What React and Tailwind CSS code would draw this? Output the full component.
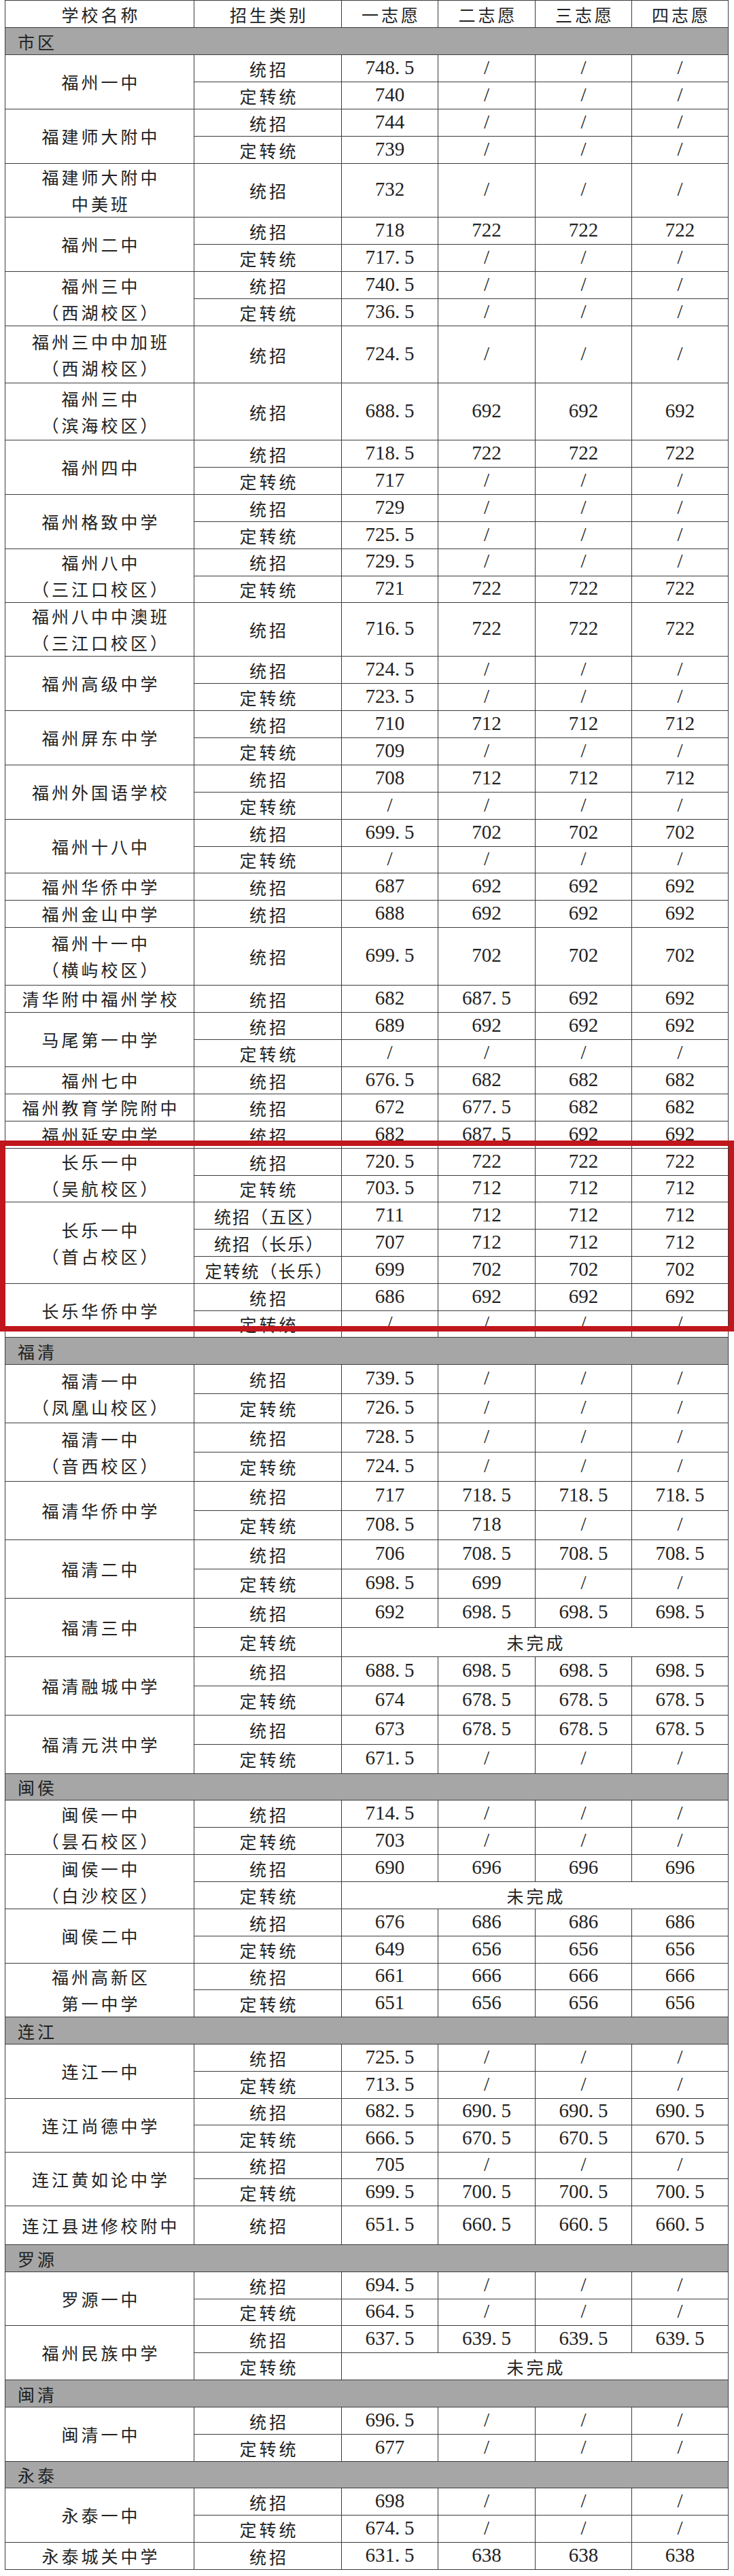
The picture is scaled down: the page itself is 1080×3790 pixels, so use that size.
import React from "react";

const CJK = "font-['Noto_Sans_CJK_SC',sans-serif]";
const SERIF = "font-['Liberation_Serif',serif]";

const H = {
  39: "h-[39px]",
  40: "h-[40px]",
  43: "h-[43px]",
  57: "h-[57px]",
  78: "h-[78px]",
  84: "h-[84px]",
  85: "h-[85px]",
};

const sections = [
  {
    name: "市区",
    h: 40,
    schools: [
      ["福州一中", [["统招", 40, "748.5", "/", "/", "/"], ["定转统", 40, "740", "/", "/", "/"]]],
      ["福建师大附中", [["统招", 40, "744", "/", "/", "/"], ["定转统", 40, "739", "/", "/", "/"]]],
      ["福建师大附中|中美班", [["统招", 78, "732", "/", "/", "/"]]],
      ["福州二中", [["统招", 40, "718", "722", "722", "722"], ["定转统", 40, "717.5", "/", "/", "/"]]],
      ["福州三中|（西湖校区）", [["统招", 40, "740.5", "/", "/", "/"], ["定转统", 40, "736.5", "/", "/", "/"]]],
      ["福州三中中加班|（西湖校区）", [["统招", 84, "724.5", "/", "/", "/"]]],
      ["福州三中|（滨海校区）", [["统招", 84, "688.5", "692", "692", "692"]]],
      ["福州四中", [["统招", 40, "718.5", "722", "722", "722"], ["定转统", 40, "717", "/", "/", "/"]]],
      ["福州格致中学", [["统招", 40, "729", "/", "/", "/"], ["定转统", 40, "725.5", "/", "/", "/"]]],
      ["福州八中|（三江口校区）", [["统招", 39, "729.5", "/", "/", "/"], ["定转统", 39, "721", "722", "722", "722"]]],
      ["福州八中中澳班|（三江口校区）", [["统招", 78, "716.5", "722", "722", "722"]]],
      ["福州高级中学", [["统招", 40, "724.5", "/", "/", "/"], ["定转统", 40, "723.5", "/", "/", "/"]]],
      ["福州屏东中学", [["统招", 40, "710", "712", "712", "712"], ["定转统", 40, "709", "/", "/", "/"]]],
      ["福州外国语学校", [["统招", 40, "708", "712", "712", "712"], ["定转统", 40, "/", "/", "/", "/"]]],
      ["福州十八中", [["统招", 40, "699.5", "702", "702", "702"], ["定转统", 39, "/", "/", "/", "/"]]],
      ["福州华侨中学", [["统招", 40, "687", "692", "692", "692"]]],
      ["福州金山中学", [["统招", 40, "688", "692", "692", "692"]]],
      ["福州十一中|（横屿校区）", [["统招", 85, "699.5", "702", "702", "702"]]],
      ["清华附中福州学校", [["统招", 39, "682", "687.5", "692", "692"]]],
      ["马尾第一中学", [["统招", 40, "689", "692", "692", "692"], ["定转统", 40, "/", "/", "/", "/"]]],
      ["福州七中", [["统招", 39, "676.5", "682", "682", "682"]]],
      ["福州教育学院附中", [["统招", 40, "672", "677.5", "682", "682"]]],
      ["福州延安中学", [["统招", 40, "682", "687.5", "692", "692"]]],
      ["长乐一中|（吴航校区）", [["统招", 40, "720.5", "722", "722", "722"], ["定转统", 39, "703.5", "712", "712", "712"]]],
      [
        "长乐一中|（首占校区）",
        [
          ["统招（五区）", 40, "711", "712", "712", "712"],
          ["统招（长乐）", 40, "707", "712", "712", "712"],
          ["定转统（长乐）", 40, "699", "702", "702", "702"],
        ],
      ],
      ["长乐华侨中学", [["统招", 40, "686", "692", "692", "692"], ["定转统", 39, "/", "/", "/", "/"]]],
    ],
  },
  {
    name: "福清",
    h: 40,
    schools: [
      ["福清一中|（凤凰山校区）", [["统招", 43, "739.5", "/", "/", "/"], ["定转统", 43, "726.5", "/", "/", "/"]]],
      ["福清一中|（音西校区）", [["统招", 43, "728.5", "/", "/", "/"], ["定转统", 43, "724.5", "/", "/", "/"]]],
      ["福清华侨中学", [["统招", 43, "717", "718.5", "718.5", "718.5"], ["定转统", 43, "708.5", "718", "/", "/"]]],
      ["福清二中", [["统招", 43, "706", "708.5", "708.5", "708.5"], ["定转统", 43, "698.5", "699", "/", "/"]]],
      ["福清三中", [["统招", 43, "692", "698.5", "698.5", "698.5"], ["定转统", 43, "未完成"]]],
      ["福清融城中学", [["统招", 43, "688.5", "698.5", "698.5", "698.5"], ["定转统", 43, "674", "678.5", "678.5", "678.5"]]],
      ["福清元洪中学", [["统招", 43, "673", "678.5", "678.5", "678.5"], ["定转统", 43, "671.5", "/", "/", "/"]]],
    ],
  },
  {
    name: "闽侯",
    h: 39,
    schools: [
      ["闽侯一中|（昙石校区）", [["统招", 40, "714.5", "/", "/", "/"], ["定转统", 40, "703", "/", "/", "/"]]],
      ["闽侯一中|（白沙校区）", [["统招", 40, "690", "696", "696", "696"], ["定转统", 40, "未完成"]]],
      ["闽侯二中", [["统招", 40, "676", "686", "686", "686"], ["定转统", 40, "649", "656", "656", "656"]]],
      ["福州高新区|第一中学", [["统招", 39, "661", "666", "666", "666"], ["定转统", 40, "651", "656", "656", "656"]]],
    ],
  },
  {
    name: "连江",
    h: 40,
    schools: [
      ["连江一中", [["统招", 40, "725.5", "/", "/", "/"], ["定转统", 40, "713.5", "/", "/", "/"]]],
      ["连江尚德中学", [["统招", 39, "682.5", "690.5", "690.5", "690.5"], ["定转统", 40, "666.5", "670.5", "670.5", "670.5"]]],
      ["连江黄如论中学", [["统招", 39, "705", "/", "/", "/"], ["定转统", 40, "699.5", "700.5", "700.5", "700.5"]]],
      ["连江县进修校附中", [["统招", 57, "651.5", "660.5", "660.5", "660.5"]]],
    ],
  },
  {
    name: "罗源",
    h: 40,
    schools: [
      ["罗源一中", [["统招", 40, "694.5", "/", "/", "/"], ["定转统", 39, "664.5", "/", "/", "/"]]],
      ["福州民族中学", [["统招", 40, "637.5", "639.5", "639.5", "639.5"], ["定转统", 40, "未完成"]]],
    ],
  },
  {
    name: "闽清",
    h: 40,
    schools: [["闽清一中", [["统招", 40, "696.5", "/", "/", "/"], ["定转统", 40, "677", "/", "/", "/"]]]],
  },
  {
    name: "永泰",
    h: 39,
    schools: [
      ["永泰一中", [["统招", 40, "698", "/", "/", "/"], ["定转统", 40, "674.5", "/", "/", "/"]]],
      ["永泰城关中学", [["统招", 40, "631.5", "638", "638", "638"]]],
    ],
  },
];

const cell = "border border-[#3c3c3c] p-0 text-center align-middle";
const cjkText = `${CJK} text-[25px] pl-[4px] leading-[32px] text-[#222]`;

function Num({ v }) {
  if (v === "/") return <span className={`${SERIF} text-[29px] text-[#222]`}>/</span>;
  const [a, b] = v.split(".");
  return (
    <span className={`${SERIF} text-[29px] text-[#222]`}>
      {a}
      {b !== undefined && (
        <>
          <span className="inline-block w-[14px] text-left">.</span>
          {b}
        </>
      )}
    </span>
  );
}

function School({ name, rows }) {
  const lines = name.split("|");
  return rows.map((r, i) => {
    const [type, h, ...vals] = r;
    const typeTrack = type.length > 3 ? "tracking-[2px]" : "tracking-[4px]";
    return (
      <tr key={i} className={H[h]}>
        {i === 0 && (
          <td rowSpan={rows.length} className={`${cell} ${cjkText} tracking-[4px] leading-[39px]`}>
            {lines.map((l, k) => (
              <div key={k}>{l}</div>
            ))}
          </td>
        )}
        <td className={`${cell} ${cjkText} ${typeTrack}`}>{type}</td>
        {vals[0] === "未完成" ? (
          <td colSpan={4} className={`${cell} ${cjkText} tracking-[4px]`}>
            未完成
          </td>
        ) : (
          vals.map((v, k) => (
            <td key={k} className={`${cell} leading-[32px]`}>
              <Num v={v} />
            </td>
          ))
        )}
      </tr>
    );
  });
}

export default function App() {
  return (
    <div className="relative w-[1080px] h-[3790px] bg-white">
      <table className="ml-[7px] w-[1064px] table-fixed border-collapse">
        <colgroup>
          <col className="w-[278px]" />
          <col className="w-[217px]" />
          <col className="w-[142px]" />
          <col className="w-[143px]" />
          <col className="w-[142px]" />
          <col className="w-[142px]" />
        </colgroup>
        <tbody>
          <tr className="h-[40px]">
            {["学校名称", "招生类别", "一志愿", "二志愿", "三志愿", "四志愿"].map((t) => (
              <td key={t} className={`${cell} ${cjkText} tracking-[4px]`}>
                {t}
              </td>
            ))}
          </tr>
          {sections.map((s) => (
            <React.Fragment key={s.name}>
              <tr className={H[s.h]}>
                <td colSpan={6} className={`${cell} ${cjkText} tracking-[4px] bg-[#a6a6a6] text-left pl-[18px]`}>
                  {s.name}
                </td>
              </tr>
              {s.schools.map(([n, rows]) => (
                <School key={n + rows[0][2]} name={n} rows={rows} />
              ))}
            </React.Fragment>
          ))}
        </tbody>
      </table>
      <div className="pointer-events-none absolute left-0 top-[1678px] h-[281px] w-[1080px] border-[8px] border-[#c0161c]" />
    </div>
  );
}
